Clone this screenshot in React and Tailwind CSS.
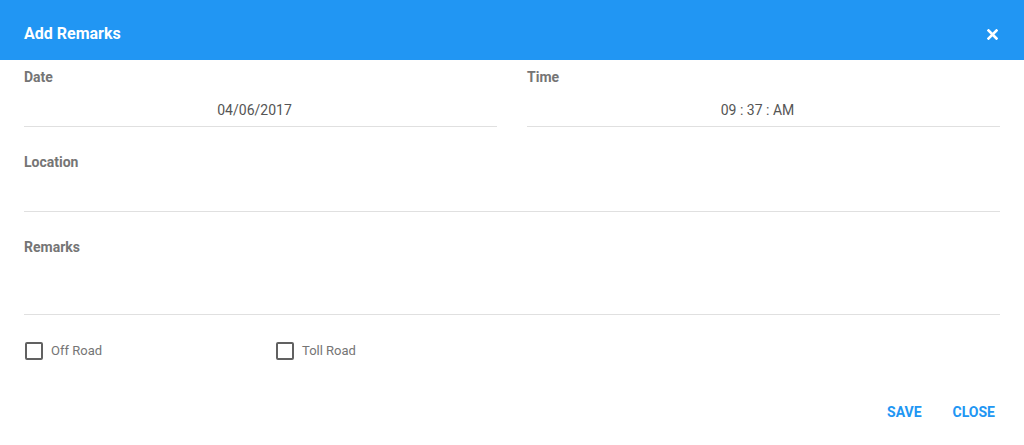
import React, { useState } from 'react';

const Field = ({ label, value, height, className = '' }) => (
	<div className={className}>
		<div className="text-[14px] leading-[18px] font-bold text-[#757575]">{label}</div>
		{value !== undefined ? (
			<div className="pt-[14px] pb-[6px] pr-3 text-center text-[14px] leading-[20px] text-[#555555] border-b border-[#e0e0e0]">
				{value}
			</div>
		) : (
			<div className={`${height} border-b border-[#e0e0e0]`} />
		)}
	</div>
);

const Check = ({ label, checked, onToggle }) => (
	<label className="flex items-center gap-[8px] cursor-pointer select-none" onClick={onToggle}>
		<span className="w-[18px] h-[18px] border-2 border-[#616161] rounded-[2px] bg-white flex items-center justify-center">
			{checked && (
				<svg width="12" height="12" viewBox="0 0 12 12" fill="none">
					<path d="M2 6.5l2.5 2.5L10 3" stroke="#616161" strokeWidth="2" />
				</svg>
			)}
		</span>
		<span className="text-[13px] leading-[16px] text-[#757575]">{label}</span>
	</label>
);

export default function App() {
	const [offRoad, setOffRoad] = useState(false);
	const [tollRoad, setTollRoad] = useState(false);

	return (
		<div className="w-[1024px] h-[445px] bg-white font-['Roboto',sans-serif]">
			{/* dialog header */}
			<div className="h-[60px] bg-[#2196f3] flex items-center justify-between pl-6 pr-[26px] pt-[8px]">
				<h2 className="text-[16px] font-bold text-white">Add Remarks</h2>
				<button className="p-0">
					<svg width="11" height="11" viewBox="0 0 11 11" fill="none">
						<path d="M1.5 1.5l8 8M9.5 1.5l-8 8" stroke="#ffffff" strokeWidth="2.6" strokeLinecap="square" />
					</svg>
				</button>
			</div>

			<div className="px-6 pt-[8px]">
				<div className="flex gap-[30px]">
					<Field label="Date" value="04/06/2017" className="flex-1" />
					<Field label="Time" value="09 : 37 : AM" className="flex-1" />
				</div>
				<Field label="Location" height="h-[41px]" className="mt-[26px]" />
				<Field label="Remarks" height="h-[59px]" className="mt-[26px]" />

				<div className="flex mt-[27px] pl-[1px]">
					<div className="w-[251px]">
						<Check label="Off Road" checked={offRoad} onToggle={() => setOffRoad(!offRoad)} />
					</div>
					<Check label="Toll Road" checked={tollRoad} onToggle={() => setTollRoad(!tollRoad)} />
				</div>
			</div>

			{/* actions */}
			<div className="flex justify-end gap-[31px] pr-[29px] mt-[44px]">
				<button className="text-[14px] leading-[16px] font-bold text-[#2196f3]">SAVE</button>
				<button className="text-[14px] leading-[16px] font-bold text-[#2196f3]">CLOSE</button>
			</div>
		</div>
	);
}
